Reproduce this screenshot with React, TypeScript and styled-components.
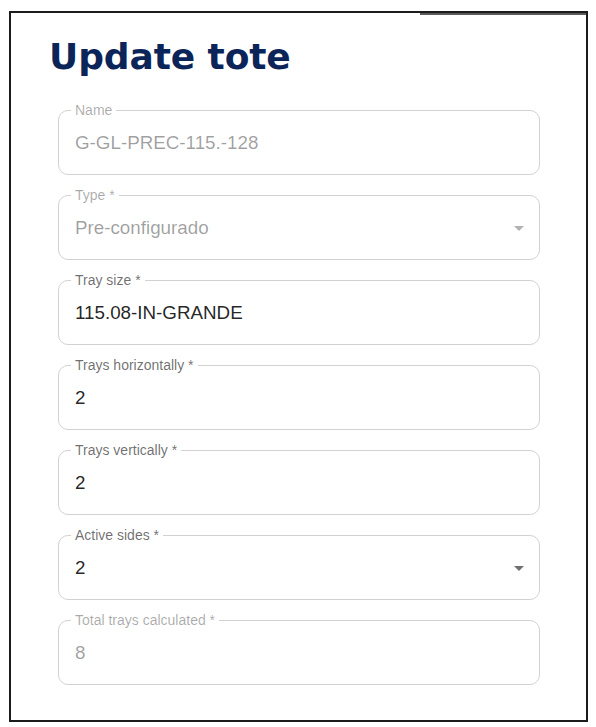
import styled, { createGlobalStyle } from "styled-components";

const GlobalStyle = createGlobalStyle`
  * {
    box-sizing: border-box;
  }
  body {
    margin: 0;
    background: #ffffff;
    font-family: "Liberation Sans", Arial, sans-serif;
  }
`;

const Page = styled.div`
  padding: 11px 0 0 9px;
`;

const Card = styled.div`
  position: relative;
  width: 579px;
  height: 711px;
  border: 2px solid #1c1c1c;
  padding: 22px 46px 0 38px;
  background: #ffffff;

  /* darker strip along the top right of the frame */
  &::after {
    content: "";
    position: absolute;
    top: 0;
    right: 0;
    width: 166px;
    height: 2px;
    background: #5a5a5a;
  }
`;

const Title = styled.h1`
  margin: 0 0 24px;
  font-family: "DejaVu Sans", Verdana, sans-serif;
  font-weight: 700;
  font-size: 36px;
  line-height: 43px;
  color: #0b2559;
  letter-spacing: -0.1px;
`;

const Form = styled.form`
  display: flex;
  flex-direction: column;
  gap: 12px;
  margin-left: 9px;
`;

const Field = styled.fieldset`
  margin: 0;
  height: 73px;
  padding: 0 16px 6px;
  border: 1px solid #d2d2d2;
  border-radius: 10px;
  min-width: 0;
`;

const Legend = styled.legend<{ $muted?: boolean }>`
  margin-left: -4px;
  padding: 0 4px;
  font-size: 14px;
  line-height: 16px;
  color: ${(p) => (p.$muted ? "rgba(0, 0, 0, 0.34)" : "rgba(0, 0, 0, 0.58)")};
`;

const Value = styled.div<{ $muted?: boolean }>`
  display: flex;
  align-items: center;
  justify-content: space-between;
  height: 49px;
  font-size: 18.8px;
  color: ${(p) => (p.$muted ? "rgba(0, 0, 0, 0.38)" : "rgba(0, 0, 0, 0.87)")};
`;

const Arrow = styled.svg<{ $muted?: boolean }>`
  width: 24px;
  height: 24px;
  margin-right: -8px;
  fill: ${(p) => (p.$muted ? "rgba(0, 0, 0, 0.3)" : "rgba(0, 0, 0, 0.56)")};
`;

type FieldDef = {
  label: string;
  value: string;
  disabled?: boolean;
  select?: boolean;
};

const fields: FieldDef[] = [
  { label: "Name", value: "G-GL-PREC-115.-128", disabled: true },
  { label: "Type *", value: "Pre-configurado", disabled: true, select: true },
  { label: "Tray size *", value: "115.08-IN-GRANDE" },
  { label: "Trays horizontally *", value: "2" },
  { label: "Trays vertically *", value: "2" },
  { label: "Active sides *", value: "2", select: true },
  { label: "Total trays calculated *", value: "8", disabled: true },
];

function App() {
  return (
    <Page>
      <GlobalStyle />
      <Card>
        <Title>Update tote</Title>
        <Form>
          {fields.map((f) => (
            <Field key={f.label}>
              <Legend $muted={f.disabled}>{f.label}</Legend>
              <Value $muted={f.disabled}>
                <span>{f.value}</span>
                {f.select && (
                  <Arrow viewBox="0 0 24 24" $muted={f.disabled}>
                    <path d="M7 10l5 5 5-5z" />
                  </Arrow>
                )}
              </Value>
            </Field>
          ))}
        </Form>
      </Card>
    </Page>
  );
}

export default App;
